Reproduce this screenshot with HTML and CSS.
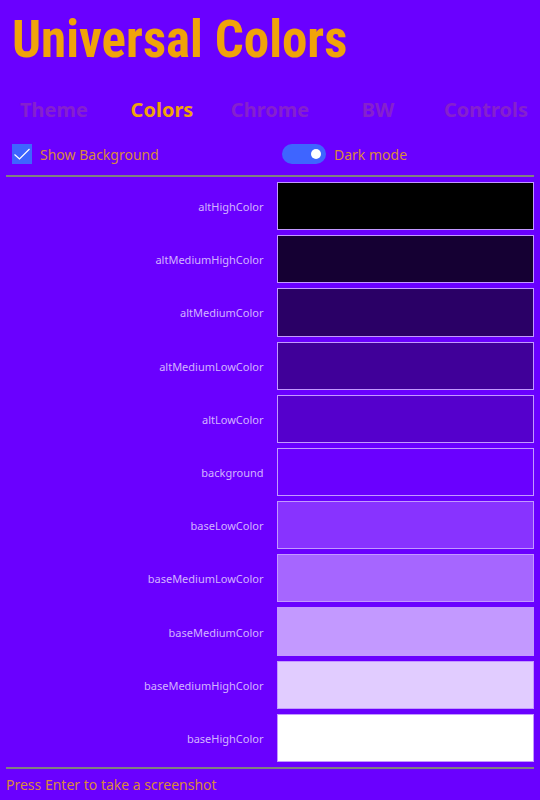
FILE: index.html
```html
<!DOCTYPE html>
<html lang="en">
<head>
<meta charset="utf-8">
<title>Universal Colors</title>
<link rel="stylesheet" href="styles.css">
</head>
<body>
<h1 class="title">Universal Colors</h1>
<nav class="tabs">
  <button class="tab" type="button">Theme</button>
  <button class="tab active" type="button">Colors</button>
  <button class="tab" type="button">Chrome</button>
  <button class="tab" type="button">BW</button>
  <button class="tab" type="button">Controls</button>
</nav>
<div class="options">
  <label class="option"><input class="check" type="checkbox" checked><svg class="tick" viewBox="0 0 20 20" aria-hidden="true"><path d="M2.500 10.500 7.500 15 17.500 5"/></svg><span class="caption">Show Background</span></label>
  <label class="option"><input class="switch" type="checkbox" role="switch" checked><span class="caption">Dark mode</span></label>
</div>
<main class="palette">
  <div class="row"><span class="name">altHighColor</span><div class="swatch alt-high"></div></div>
  <div class="row"><span class="name">altMediumHighColor</span><div class="swatch alt-medium-high"></div></div>
  <div class="row"><span class="name">altMediumColor</span><div class="swatch alt-medium"></div></div>
  <div class="row"><span class="name">altMediumLowColor</span><div class="swatch alt-medium-low"></div></div>
  <div class="row"><span class="name">altLowColor</span><div class="swatch alt-low"></div></div>
  <div class="row"><span class="name">background</span><div class="swatch background"></div></div>
  <div class="row"><span class="name">baseLowColor</span><div class="swatch base-low"></div></div>
  <div class="row"><span class="name">baseMediumLowColor</span><div class="swatch base-medium-low"></div></div>
  <div class="row"><span class="name">baseMediumColor</span><div class="swatch base-medium"></div></div>
  <div class="row"><span class="name">baseMediumHighColor</span><div class="swatch base-medium-high"></div></div>
  <div class="row"><span class="name">baseHighColor</span><div class="swatch base-high"></div></div>
</main>
<footer class="status">Press Enter to take a screenshot</footer>
</body>
</html>
```

FILE: styles.css
```css
* {
  box-sizing: border-box;
}

body {
  margin: 0;
  min-height: 100vh;
  display: flex;
  flex-direction: column;
  background: #6a00ff;
  color: #d98a3c;
  font-family: "Segoe UI", "Noto Sans", "Open Sans", sans-serif;
  font-size: 14px;
  line-height: 20px;
}

.title {
  margin: 0;
  padding: 10px 12px;
  color: #f0a30a;
  font-family: "Roboto Condensed", "Liberation Sans Narrow", "Liberation Sans", sans-serif;
  font-size: 51px;
  line-height: 60px;
  font-weight: 700;
}

.tabs {
  display: grid;
  grid-template-columns: repeat(5, 1fr);
  padding: 14px 0;
}

.tab {
  min-width: 0;
  padding: 0;
  border: 0;
  background: none;
  color: #8520ce;
  font-family: inherit;
  font-size: 20px;
  line-height: 32px;
  font-weight: 700;
}

.tab.active {
  color: #f0a30a;
}

.options {
  display: grid;
  grid-template-columns: 1fr 1fr;
  padding: 3px 0 10px;
}

.option {
  display: flex;
  align-items: center;
  gap: 8px;
  padding-left: 12px;
  position: relative;
}

.caption {
  padding-top: 2px;
}

.check,
.switch {
  appearance: none;
  margin: 0;
  height: 20px;
  background: #3e65ff;
}

.check {
  width: 20px;
}

.tick {
  position: absolute;
  left: 12px;
  width: 20px;
  height: 20px;
  fill: none;
  stroke: #fff;
  stroke-width: 1.2;
  pointer-events: none;
}

.switch {
  display: flex;
  align-items: center;
  justify-content: flex-end;
  width: 44px;
  padding: 5px;
  border-radius: 10px;
}

.switch::before {
  content: "";
  width: 10px;
  height: 10px;
  border-radius: 50%;
  background: #fff;
}

.palette {
  flex: 1;
  display: grid;
  grid-auto-rows: minmax(24px, 1fr);
  gap: 5px;
  margin: 0 6px;
  padding: 5px 0;
  border-top: 2px solid #808080;
  border-bottom: 2px solid #808080;
}

.row {
  display: grid;
  grid-template-columns: 1fr 1fr;
  gap: 13px;
}

.name {
  align-self: center;
  padding-top: 2px;
  text-align: right;
  color: #d2b3ff;
  font-size: 11px;
  line-height: 16px;
}

.swatch {
  border: 1px solid #c399ff;
}

.alt-high { background: #000; }
.alt-medium-high { background: #150033; }
.alt-medium { background: #2a0066; }
.alt-medium-low { background: #400099; }
.alt-low { background: #5500cc; }
.background { background: #6a00ff; }
.base-low { background: #8833ff; }
.base-medium-low { background: #a666ff; }
.base-medium { background: #c399ff; }
.base-medium-high { background: #e1ccff; }
.base-high { background: #fff; }

.status {
  padding: 6px 6px 5px;
}
```
